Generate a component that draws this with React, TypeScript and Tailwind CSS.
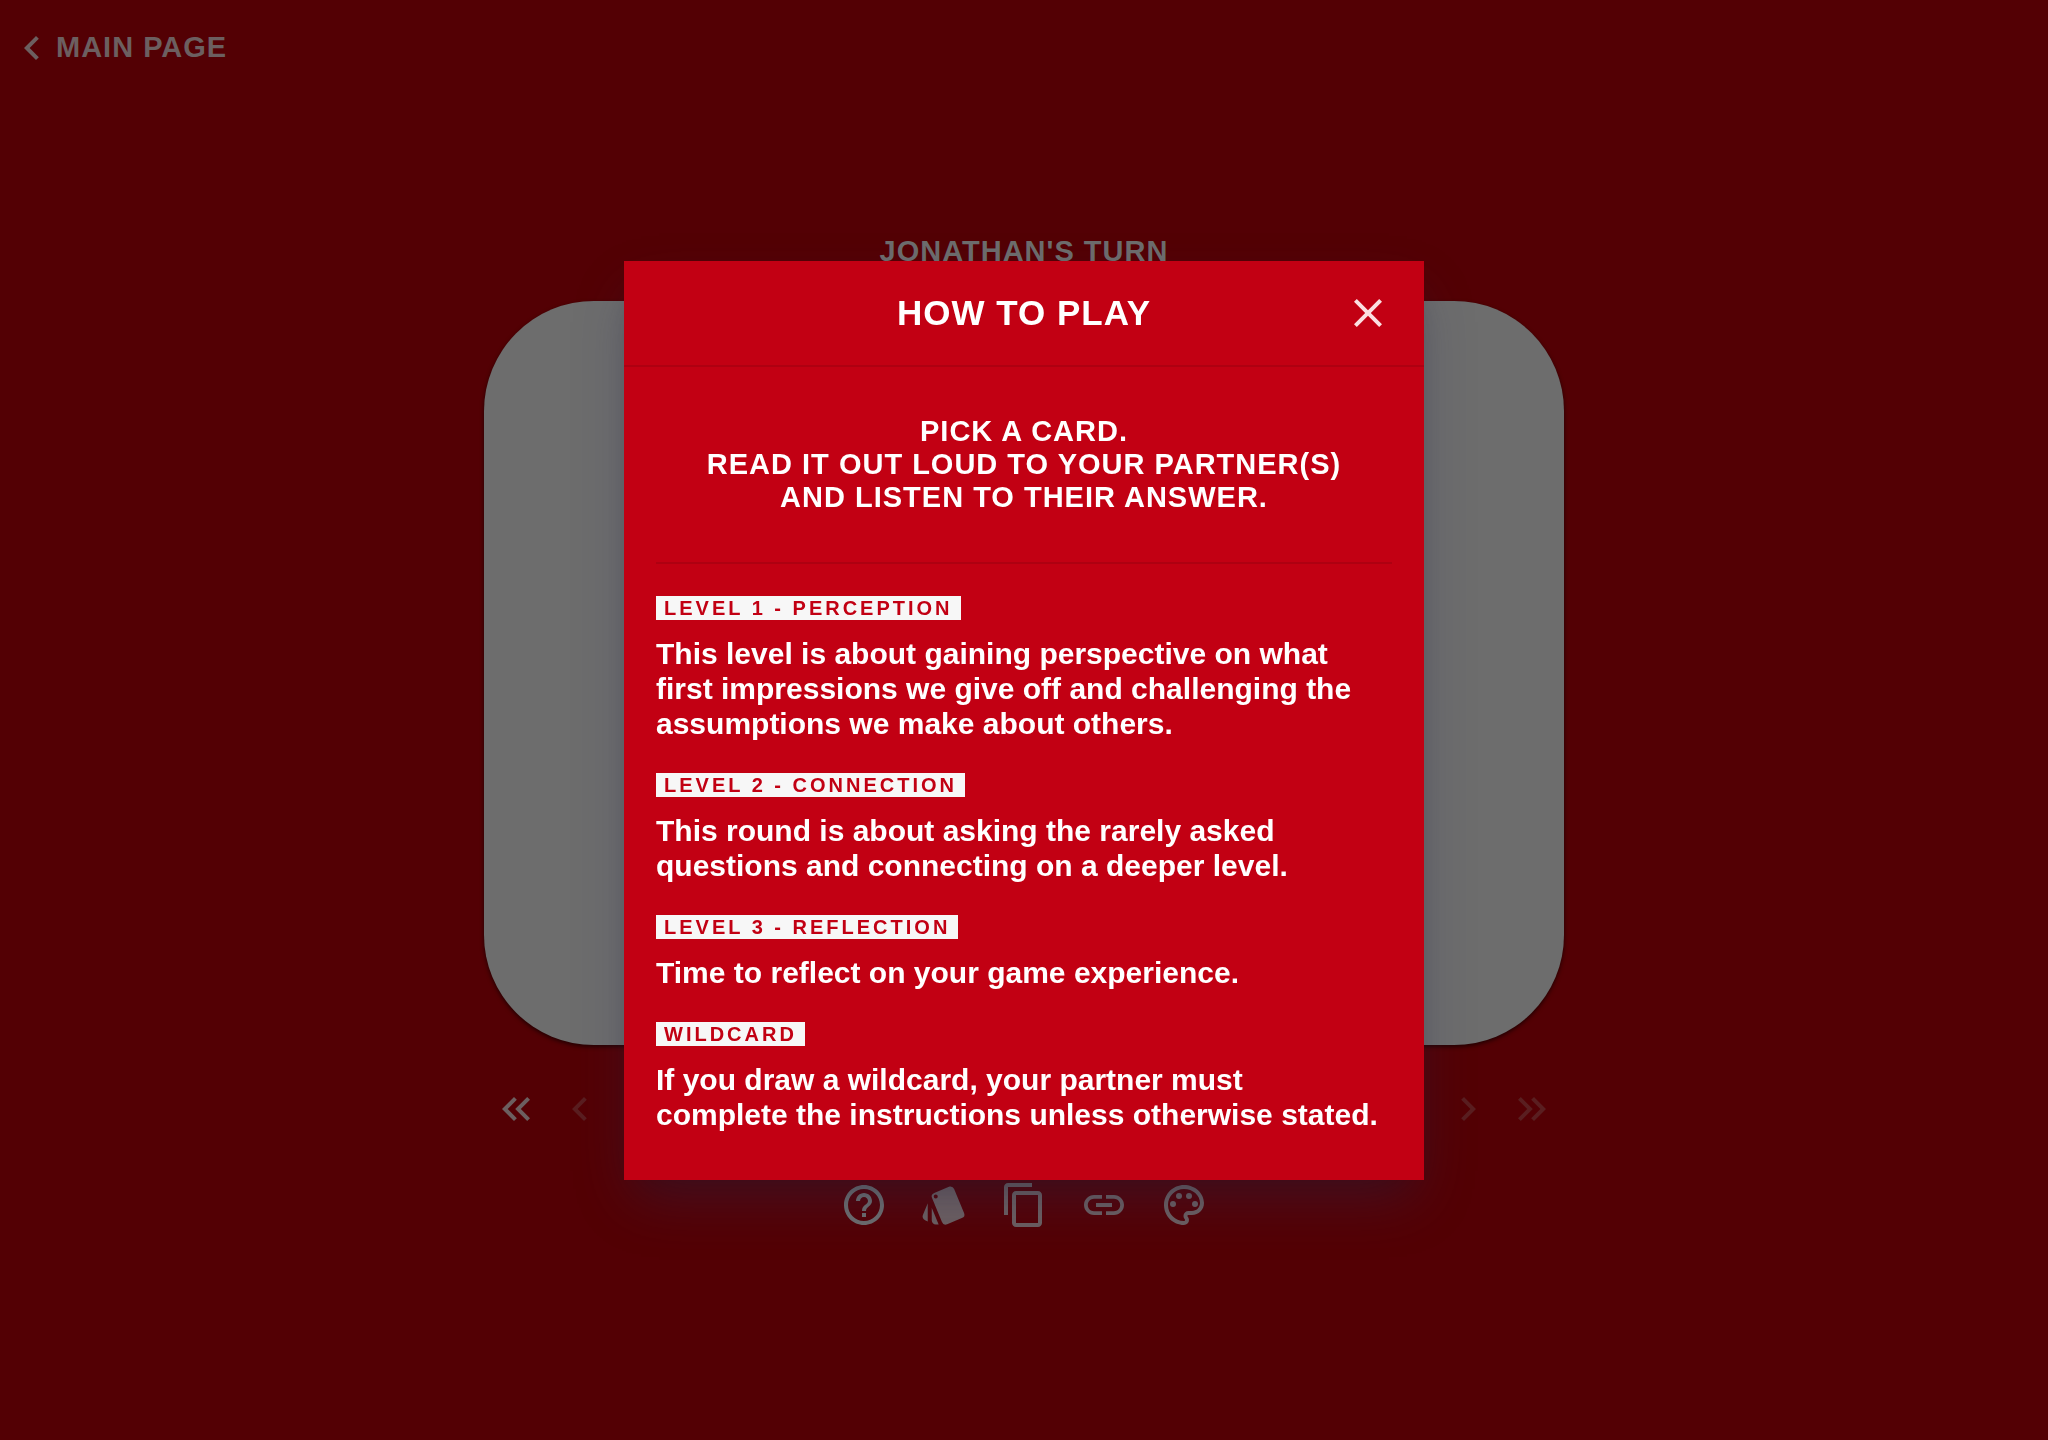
import { MdChevronLeft, MdChevronRight, MdClose, MdContentCopy, MdHelpOutline, MdKeyboardDoubleArrowLeft, MdKeyboardDoubleArrowRight, MdLink, MdOutlinePalette, MdStyle } from "react-icons/md";

const levels = [
  { tag: "LEVEL 1 - PERCEPTION", lines: ["This level is about gaining perspective on what", "first impressions we give off and challenging the", "assumptions we make about others."] },
  { tag: "LEVEL 2 - CONNECTION", lines: ["This round is about asking the rarely asked", "questions and connecting on a deeper level."] },
  { tag: "LEVEL 3 - REFLECTION", lines: ["Time to reflect on your game experience."] },
  { tag: "WILDCARD", lines: ["If you draw a wildcard, your partner must", "complete the instructions unless otherwise stated."] },
];

const tools = [
  { label: "How to play", Icon: MdHelpOutline },
  { label: "Decks", Icon: MdStyle },
  { label: "Copy", Icon: MdContentCopy },
  { label: "Share link", Icon: MdLink },
  { label: "Theme", Icon: MdOutlinePalette },
];

function Game() {
  return (
    <div className="flex min-h-screen flex-col bg-[#530004] font-bold text-[#6c5f60]">
      <header className="flex h-24 items-center px-2">
        <a href="#" className="flex items-center text-[29px] tracking-[1px]">
          <MdChevronLeft className="size-12" />
          MAIN PAGE
        </a>
      </header>
      <main className="mx-auto w-full max-w-[1080px] pt-[135px]">
        <h1 className="text-center text-[29px] leading-[40px] tracking-[1px] text-[#6d6d6d]">JONATHAN'S TURN</h1>
        <div className="mt-[30px] h-[744px] rounded-[110px] bg-[#6d6d6d] shadow-[0_2px_4px_rgba(0,0,0,0.6)]" />
        <nav aria-label="Cards" className="mt-10 flex justify-between px-2">
          <div className="flex gap-4">
            <button aria-label="First card"><MdKeyboardDoubleArrowLeft className="size-12" /></button>
            <button aria-label="Previous card" className="text-[#5a1e20]"><MdChevronLeft className="size-12" /></button>
          </div>
          <div className="flex gap-4 text-[#5a1e20]">
            <button aria-label="Next card"><MdChevronRight className="size-12" /></button>
            <button aria-label="Last card"><MdKeyboardDoubleArrowRight className="size-12" /></button>
          </div>
        </nav>
        <div className="mt-12 flex justify-center gap-8">
          {tools.map(({ label, Icon }) => (
            <button key={label} aria-label={label} className="first:text-[#6d6d6d]"><Icon className="size-12" /></button>
          ))}
        </div>
      </main>
    </div>
  );
}

export default function App() {
  return (
    <div className="font-['Liberation_Sans',Arial,sans-serif]">
      <Game />
      <div className="fixed inset-0 flex items-center justify-center">
        <section role="dialog" aria-modal="true" aria-labelledby="title" className="w-full max-w-[800px] bg-[#c20013] font-bold text-white shadow-[0_26px_54px_-8px_rgba(50,50,93,0.33),0_16px_32px_-16px_rgba(0,0,0,0.3)]">
          <header className="grid grid-cols-[1fr_auto_1fr] items-center border-b-2 border-[#ae0011] px-8 py-7">
            <h2 id="title" className="col-start-2 text-[35px] leading-[48px] tracking-[1px]">HOW TO PLAY</h2>
            <button aria-label="Close" className="justify-self-end text-[#fbdfe1]"><MdClose className="size-12" /></button>
          </header>
          <div className="px-8 pb-12">
            <p className="border-b-2 border-[#ae0011] py-12 text-center text-[29px] leading-[33px] tracking-[1px]">
              PICK A CARD.<br />READ IT OUT LOUD TO YOUR PARTNER(S)<br />AND LISTEN TO THEIR ANSWER.
            </p>
            {levels.map(({ tag, lines }) => (
              <div key={tag} className="mt-8">
                <h3 className="w-fit bg-[#f7f7f7] px-2 text-[20px] leading-6 tracking-[3px] text-[#c20013]">{tag}</h3>
                <p className="mt-4 text-[30px] leading-[35px]">
                  {lines.map((line) => (
                    <span key={line} className="block">{line}</span>
                  ))}
                </p>
              </div>
            ))}
          </div>
        </section>
      </div>
    </div>
  );
}
